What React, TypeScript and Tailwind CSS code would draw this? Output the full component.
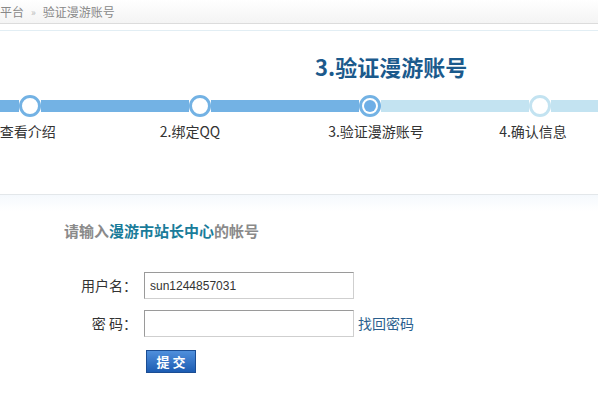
const cjk = '"Noto Sans CJK SC", "Liberation Sans", sans-serif';

function Ring({ kind }: { kind: 'done' | 'current' | 'todo' }) {
  if (kind === 'current') {
    return (
      <div className="w-[22px] h-[22px] shrink-0 rounded-full border-[3px] border-[#73b2e4] bg-white flex items-center justify-center">
        <div className="w-[12px] h-[12px] rounded-full bg-[#6eaee6]" />
      </div>
    );
  }
  return (
    <div
      className={
        kind === 'done'
          ? 'w-[22px] h-[22px] shrink-0 rounded-full border-[3px] border-[#73b2e4] bg-white'
          : 'w-[22px] h-[22px] shrink-0 rounded-full border-[3px] border-[#c3e3f1] bg-white'
      }
    />
  );
}

function Seg({ w, done }: { w: string; done: boolean }) {
  return <div className={`${w} h-[12px] shrink-0 ${done ? 'bg-[#73b2e4]' : 'bg-[#c3e3f1]'}`} />;
}

export default function App() {
  return (
    <div className="w-[598px] h-[418px] overflow-hidden bg-white" style={{ fontFamily: cjk }}>
      {/* breadcrumb */}
      <div className="h-[24px] bg-gradient-to-b from-white to-[#f4f4f4] border-b border-[#dcdcdc] flex items-center text-[12px] text-[#888] leading-none">
        <span>平台</span>
        <span className="mx-[7px] text-[10px] text-[#bbb]">»</span>
        <span>验证漫游账号</span>
      </div>
      <div className="mt-[6px] h-px bg-[#e2eef4]" />

      {/* title */}
      <div className="pt-[21px] pl-[315px] text-[22px] font-bold leading-[28px] text-[#1b5a8c]">3.验证漫游账号</div>

      {/* progress */}
      <div className="mt-[15px] flex items-center h-[22px]">
        <Seg w="w-[19px]" done />
        <Ring kind="done" />
        <Seg w="w-[148px]" done />
        <Ring kind="done" />
        <Seg w="w-[148px]" done />
        <Ring kind="current" />
        <Seg w="w-[148px]" done={false} />
        <Ring kind="todo" />
        <Seg w="w-[47px]" done={false} />
      </div>
      <div className="mt-[4px] flex text-[14px] leading-[20px] text-[#333] whitespace-nowrap">
        <span className="w-[120px] shrink-0 text-center ml-[-38px]">1.查看介绍</span>
        <span className="w-[120px] shrink-0 text-center ml-[48px]">2.绑定QQ</span>
        <span className="w-[120px] shrink-0 text-center ml-[66px]">3.验证漫游账号</span>
        <span className="w-[120px] shrink-0 text-center ml-[37px]">4.确认信息</span>
      </div>

      {/* divider */}
      <div className="mt-[53px] h-px bg-[#e3e7ea]" />
      <div className="h-[16px] bg-gradient-to-b from-[#f5f9fd] to-white" />

      {/* form */}
      <div className="pl-[64px] pt-[10px] text-[15px] font-bold leading-[20px] text-[#8a8a8a]">
        请输入<span className="text-[#1a7c9a]">漫游市站长中心</span>的帐号
      </div>

      <div className="mt-[31px] flex flex-col gap-[11px]">
        <div className="flex items-center">
          <span className="w-[137px] shrink-0 text-right text-[14px] text-[#333]">用户名：</span>
          <div className="ml-[7px] w-[210px] h-[27px] border border-t-[#9a9a9a] border-l-[#9a9a9a] border-r-[#cfcfcf] border-b-[#cfcfcf] flex items-center pl-[5px] text-[12px] text-[#333]" style={{ fontFamily: '"Liberation Sans", sans-serif' }}>
            sun1244857031
          </div>
        </div>
        <div className="flex items-center">
          <span className="w-[137px] shrink-0 text-right text-[14px] text-[#333]">密 码：</span>
          <div className="ml-[7px] w-[210px] h-[27px] border border-t-[#9a9a9a] border-l-[#9a9a9a] border-r-[#cfcfcf] border-b-[#cfcfcf]" />
          <a className="ml-[4px] text-[14px] text-[#2b5f8e]">找回密码</a>
        </div>
        <div className="pl-[146px]">
          <button className="w-[50px] h-[23px] border border-[#1b4d93] bg-gradient-to-b from-[#4f8fdc] to-[#1c5cb2] text-white text-[13px] font-bold leading-none tracking-[3px] pl-[3px]">
            提交
          </button>
        </div>
      </div>
    </div>
  );
}
